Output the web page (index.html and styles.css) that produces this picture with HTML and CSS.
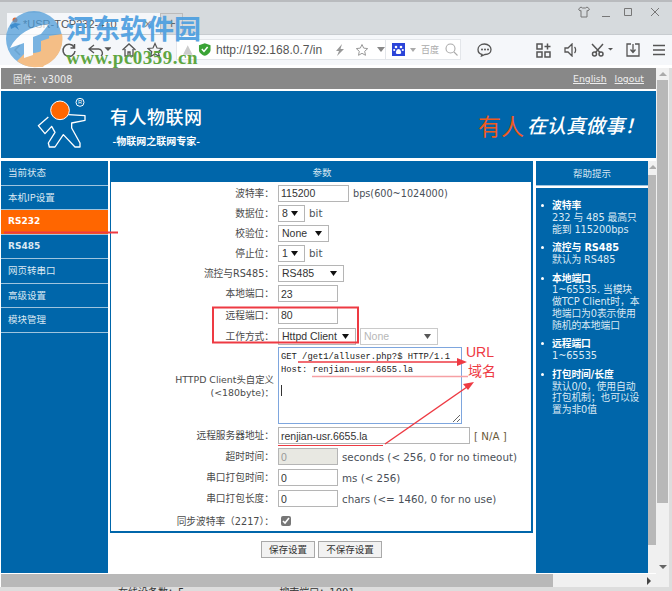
FILE: index.html
```html
<!DOCTYPE html>
<html lang="zh">
<head>
<meta charset="utf-8">
<title>USR-TCP232-410</title>
<link rel="stylesheet" href="styles.css">
</head>
<body>
<div class="topstrip"></div>
<div class="tabbar">
  <div class="tab"><svg class="tabicon" width="14" height="14" viewBox="0 0 14 14"><circle cx="6" cy="3" r="2.5" fill="#e8662a"/><path d="M1 8 6 6l6 1-4 2 2 4-4-3-4 2z" fill="#1f6db5"/></svg><span>*USR-TCP232-410</span><i class="tabx">×</i></div>
  <div class="newtab">+</div>
  <div class="winbtns">
    <svg width="14" height="14" viewBox="0 0 14 14" fill="none" stroke="#777"><path d="M4 2 1.500 4 3 6l1-.5V12h6V5.500l1 .5 1.500-2L10 2 8.500 3h-3z"/></svg>
    <svg width="12" height="14" viewBox="0 0 12 14" fill="none" stroke="#777"><path d="M2 11.500h8"/></svg>
    <svg width="12" height="14" viewBox="0 0 12 14" fill="none" stroke="#777"><path d="M2.500 3.500h7v7h-7z"/></svg>
    <svg width="12" height="14" viewBox="0 0 12 14" fill="none" stroke="#777"><path d="m2 3 8 8m0-8-8 8"/></svg>
  </div>
</div>
<div class="toolbar">
  <div class="navicons">
    <svg width="16" height="16" viewBox="0 0 16 16" fill="none" stroke="#555" stroke-width="1.500"><path d="M10 3 5 8l5 5" stroke="#bbb"/></svg>
    <svg width="16" height="16" viewBox="0 0 16 16" fill="none" stroke="#555" stroke-width="1.500"><path d="M13 5a6 6 0 1 0 1 4M13.500 2v4h-4"/></svg>
    <svg width="24" height="16" viewBox="0 0 24 16" fill="none" stroke="#555" stroke-width="1.300"><path d="M7 3 2 7l5 4M2 7h9a4 4 0 0 1 3 7"/><path d="m19 6 2 2 2-2z" fill="#555"/></svg>
    <svg width="16" height="16" viewBox="0 0 16 16" fill="none" stroke="#555" stroke-width="1.300"><path d="m1.500 8 6.500-6 6.500 6M4 7v7h3v-4h2v4h3V7"/></svg>
    <svg width="16" height="16" viewBox="0 0 16 16" fill="none" stroke="#555" stroke-width="1.200"><path d="m8 1.500 2 4.500 5 .5-3.800 3.200 1.200 4.800L8 12l-4.400 2.500 1.200-4.800L1 6.500 6 6z"/></svg>
  </div>
  <div class="urlbar">
    <svg width="14" height="14" viewBox="0 0 14 14" class="peak"><path d="M7 2 2 12h10z" fill="#ccc"/></svg>
    <svg width="14" height="15" viewBox="0 0 14 15"><path d="M7 1 13 3v5c0 3-3 5-6 6-3-1-6-3-6-6V3z" fill="#3aa335"/><path d="m4 7 2.200 2.500L10 5" fill="none" stroke="#fff" stroke-width="1.600"/></svg>
    <span class="url">http://192.168.0.7/in</span>
    <svg class="bolt" width="10" height="14" viewBox="0 0 10 14"><path d="M7 1 1 8h3l-2 5 7-7H5.500z" fill="#999"/></svg>
    <svg class="urlstar" width="14" height="14" viewBox="0 0 14 14" fill="none" stroke="#999"><path d="m7 1.500 1.700 3.600 4 .5-3 2.700.8 4L7 10.300 3.500 12.300l.8-4-3-2.700 4-.5z"/></svg>
    <svg class="caret" width="8" height="5" viewBox="0 0 8 5"><path d="M0 0h8L4 5z" fill="#888"/></svg>
  </div>
  <div class="searchbar">
    <svg width="13" height="13" viewBox="0 0 13 13"><path d="M0 0h13v13H0z" fill="#2b44d8"/><g fill="#fff"><circle cx="4" cy="4" r="1.300"/><circle cx="9" cy="4" r="1.300"/><circle cx="2.200" cy="7" r="1.100"/><circle cx="10.800" cy="7" r="1.100"/><path d="M6.500 6C4.500 6 3.500 9 4 10.500c1 .8 4 .8 5 0C9.500 9 8.500 6 6.500 6z"/></g></svg>
    <svg width="6" height="4" viewBox="0 0 6 4"><path d="M0 0h6L3 4z" fill="#aaa"/></svg>
    <span class="engine">百度</span>
    <svg width="13" height="13" viewBox="0 0 13 13" fill="none" stroke="#aaa" stroke-width="1.100"><circle cx="5.500" cy="5.500" r="4.500"/><path d="m9 9 3.500 3.500"/></svg>
  </div>
  <div class="tools">
    <svg class="chat" width="15" height="14" viewBox="0 0 15 14"><path d="M7.500 1C3.500 1 1 3.500 1 6.500 1 9 3 11 5 11.500L4.500 13l3.500-1.500c4 0 6-2.500 6-5S11.500 1 7.500 1z" fill="none" stroke="#555" stroke-width="1.300"/><circle cx="5" cy="6.500" r="1" fill="#555"/><circle cx="8" cy="6.500" r="1" fill="#555"/><circle cx="11" cy="6.500" r="1" fill="#555"/></svg>
    <svg width="15" height="15" viewBox="0 0 15 15" fill="none" stroke="#555" stroke-width="1.500"><path d="M1 1h5v5H1zM1 9h5v5H1zM9 9h5v5H9zM11.500.500v6M8.500 3.500h6"/></svg>
    <svg width="14" height="14" viewBox="0 0 14 14" fill="none" stroke="#555" stroke-width="1.300"><path d="M1 5v4h3l4 4V1L4 5zM10.500 4c1.500 1.500 1.500 4.500 0 6"/></svg>
    <svg width="22" height="14" viewBox="0 0 22 14" fill="none" stroke="#555" stroke-width="1.500"><circle cx="3.500" cy="11" r="2"/><circle cx="10" cy="11" r="2"/><path d="M1 1l8 8.500M12 1 4.500 9.500"/><path d="m17 5 2.500 2.500L22 5z" fill="#555" stroke="none"/></svg>
    <svg width="14" height="14" viewBox="0 0 14 14" fill="none" stroke="#555" stroke-width="1.300"><path d="M5 1H1v12h12V1H9M7 1v8M4.500 6.500 7 9.500l2.500-3"/></svg>
    <svg width="12" height="12" viewBox="0 0 12 12" fill="none" stroke="#555" stroke-width="1.300"><path d="M0 1.500h12M0 6h12M0 10.500h12"/></svg>
  </div>
</div>
<div class="viewport">
  <div class="pagewrap">
    <div class="page">
      <div class="fwbar"><span>固件：v3008</span><div class="fwlinks"><a>English</a><a>logout</a></div></div>
      <div class="header">
        <svg class="logo" width="70" height="64" viewBox="0 0 210 192" fill="none" stroke="#fff" stroke-width="4" stroke-linejoin="round"><path d="M115 65 165 68v14l-40 8v15l25 45v12h-15l-35-37-25 37H58l-3-12 20-32-10-18-20 22-20-24 30-26"/><circle cx="90" cy="52" r="28" fill="#ff6600" stroke-width="3"/><circle cx="150" cy="28" r="12" stroke-width="3"/><text x="144" y="34" fill="#fff" stroke="none" font-size="17" font-family="Liberation Sans">R</text></svg>
        <div class="brand"><div class="brandname">有人物联网</div><div class="brandsub">-物联网之联网专家-</div></div>
        <div class="slogan"><b>有人</b><em>在认真做事！</em></div>
      </div>
      <div class="frame">
        <nav class="nav">
          <a>当前状态</a><a>本机IP设置</a><a class="on">RS232</a><a class="latin">RS485</a><a>网页转串口</a><a>高级设置</a><a>模块管理</a>
        </nav>
        <main class="main">
          <div class="panel">
            <div class="panelhead">参数</div>
            <div class="row"><label>波特率：</label><input class="w70" value="115200"><span class="bps">bps(600~1024000)</span></div>
            <div class="row"><label>数据位：</label><select class="w26"><option>8</option></select><span>bit</span></div>
            <div class="row"><label>校验位：</label><select class="w51"><option>None</option></select></div>
            <div class="row"><label>停止位：</label><select class="w26"><option>1</option></select><span>bit</span></div>
            <div class="row"><label>流控与RS485：</label><select class="w66"><option>RS485</option></select></div>
            <div class="row tall"><label>本地端口：</label><input class="w60" value="23"></div>
            <div class="row taller"><label>远程端口：</label><input class="w60" value="80"></div>
            <div class="row"><label>工作方式：</label><select class="w78"><option>Httpd Client</option></select><select class="w78 off" disabled><option>None</option></select></div>
            <div class="row area"><label class="narrow">HTTPD Client头自定义<br>(&lt;180byte)：</label><textarea spellcheck="false">GET /get1/alluser.php?$ HTTP/1.1
Host: renjian-usr.6655.la</textarea></div>
            <div class="row tall"><label>远程服务器地址：</label><input class="w192" value="renjian-usr.6655.la"><span class="na">[ N/A ]</span></div>
            <div class="row tall"><label>超时时间：</label><input class="w60 dis" value="0" disabled><span>seconds (&lt; 256, 0 for no timeout)</span></div>
            <div class="row tall"><label>串口打包时间：</label><input class="w60" value="0"><span>ms (&lt; 256)</span></div>
            <div class="row tall"><label>串口打包长度：</label><input class="w60" value="0"><span>chars (&lt;= 1460, 0 for no use)</span></div>
            <div class="row last"><label>同步波特率（2217）：</label><input type="checkbox" checked class="chk"></div>
          </div>
          <div class="btns"><button class="b54">保存设置</button><button class="b64">不保存设置</button></div>
        </main>
        <aside class="help">
          <div class="helphead">帮助提示</div>
          <ul class="helpbody">
            <li><b>波特率</b><br>232 与 485 最高只<br>能到 115200bps</li>
            <li><b>流控与 RS485</b><br>默认为 RS485</li>
            <li><b>本地端口</b><br>1~65535. 当模块<br>做TCP Client时，本<br>地端口为0表示使用<br>随机的本地端口</li>
            <li><b>远程端口</b><br>1~65535</li>
            <li><b>打包时间/长度</b><br>默认0/0，使用自动<br>打包机制；也可以设<br>置为非0值</li>
          </ul>
        </aside>
        <div class="vscroll inner"><i class="up"></i><div class="thumb"></div></div>
      </div>
      <div class="hscroll"><div class="hthumb"></div><i class="right"></i></div>
    </div>
    <div class="vscroll outer"><i class="up"></i><div class="thumb"></div><i class="down"></i></div>
  </div>
  <div class="under"><span>在线设备数：5</span><span>搜索端口：1001</span></div>
</div>

<div class="mark">
  <svg class="markicon" width="58" height="58" viewBox="0 0 58 58"><circle cx="29" cy="29" r="28" fill="#4a9ad8"/><path d="M57 24A28 28 0 0 1 12 51L22 41A15 15 0 0 0 44 26z" fill="#f4a95a"/><path d="M5 38C12 24 26 16 44 14L36 24 28 27v18l-9 3V33z" fill="#fff"/><path d="M28 45h8V31l9-3v20l-7 9-10 0z" fill="#f4a95a"/></svg>
  <div class="marktitle">河东软件园</div>
  <div class="markurl">www.pc0359.cn</div>
</div>

<div class="note">
  <svg class="notes" width="672" height="591" viewBox="0 0 672 591" fill="none">
    <path d="M4 232.500h114" stroke="#ee3a43" stroke-width="2"/>
    <path d="M213 307.500h145v35H213z" stroke="#ee3a43" stroke-width="2"/>
    <path d="M298 362h160" stroke="#ee3a43" stroke-width="1.300"/>
    <path d="m457 358 10 4-10 4z" fill="#ee3a43"/>
    <path d="M312 376.500h156" stroke="#f6a0a4" stroke-width="1.300"/>
    <path d="M278 445.500h105" stroke="#ee3a43" stroke-width="1.200"/>
    <path d="m385 444 82-57" stroke="#ee3a43" stroke-width="1.500"/>
    <path d="m474 382-11 2 5 6z" fill="#ee3a43"/>
    <path d="M281.500 385v11" stroke="#333"/>
  </svg>
  <span class="noteurl">URL</span>
  <span class="notedomain">域名</span>
</div>
</body>
</html>
```

FILE: styles.css
```css
* { box-sizing: border-box; }
html, body { margin: 0; padding: 0; }
body {
  width: 672px; height: 591px; overflow: hidden; position: relative;
  display: flex; flex-direction: column;
  background: #fff;
  font-family: "DejaVu Sans", "Noto Sans CJK SC", sans-serif;
  font-size: 10px; color: #444;
}
.topstrip { height: 2px; background: #b9bbbe; flex: none; }
.tabbar { height: 33px; flex: none; background: #d6dadd; display: flex; align-items: flex-end; position: relative; border-bottom: 1px solid #c8ccd0; }
.tab { width: 153px; height: 21px; margin-left: 7px; background: #f5f7fa; display: flex; align-items: center; gap: 0; padding-left: 2px; font: 11px "Liberation Sans", sans-serif; color: #555; }
.tab span { flex: 1; white-space: nowrap; }
.tabx { font-style: normal; color: #888; margin-right: 8px; font-size: 14px; }
.newtab { width: 23px; height: 21px; border: 1px solid #bbb; border-bottom: 0; text-align: center; font: 14px/19px "Liberation Sans", sans-serif; color: #666; }
.winbtns { margin-left: auto; align-self: flex-start; display: flex; padding: 3px 11px 0 0; gap: 9px; }
.winbtns svg:nth-child(3) { margin-left: 1px; }
.winbtns svg:nth-child(4) { margin-left: 6px; }
.toolbar { height: 33px; flex: none; background: #f5f7fa; display: flex; align-items: flex-start; padding-top: 4px; border-bottom: 3px solid #fff; }
.navicons { width: 176px; display: flex; gap: 10px; align-items: center; height: 22px; padding-left: 10px; flex: none; }
.navicons svg:first-child { margin-right: 13px; }
.navicons svg:nth-child(2) { margin-left: 12px; }
.urlbar { width: 210px; height: 21px; background: #fff; border: 1px solid #e3e6ea; display: flex; align-items: center; gap: 3px; padding-left: 4px; font: 12px "Liberation Sans", sans-serif; color: #555; overflow: hidden; flex: none; }
.url { width: 108px; margin-left: 2px; white-space: nowrap; overflow: hidden; flex: none; }
.bolt { margin-left: 8px; flex: none; }
.urlstar { margin-left: 7px; flex: none; }
.caret { margin-left: 5px; flex: none; }
.searchbar { width: 76px; height: 21px; background: #fff; border: 1px solid #e3e6ea; display: flex; align-items: center; gap: 5px; padding-left: 6px; margin-left: -1px; flex: none; }
.engine { width: 19px; overflow: hidden; white-space: nowrap; font-size: 9px; color: #aaa; font-family: "Noto Sans CJK SC", sans-serif; }
.tools { display: flex; align-items: center; gap: 13px; height: 22px; margin-left: 16px; }
.chat { margin-right: 31px; }
.viewport { flex: 1; background: #c9c9c9; display: flex; flex-direction: column; overflow: hidden; min-height: 0; }
.pagewrap { display: flex; height: 519px; flex: none; background: #fff; border-right: 3px solid #ddd; padding-left: 1px; }
.page { width: 655px; display: flex; flex-direction: column; flex: none; }
.fwbar { height: 21px; background: #888; color: #eee; display: flex; justify-content: space-between; align-items: center; padding: 0 12px 0 12px; font-size: 9.700px; flex: none; }
.fwlinks { display: flex; gap: 8px; font-size: 9.300px; }
.fwlinks a { text-decoration: underline; }
.header { height: 67px; margin-top: 2px; background: #0066aa; flex: none; display: flex; align-items: center; position: relative; }
.logo { margin-left: 29px; flex: none; }
.brand { margin-left: 10px; margin-top: 4px; color: #fff; font-family: "Noto Sans CJK SC", serif; text-align: center; }
.brandname { font-size: 18px; line-height: 24px; font-weight: 500; letter-spacing: .5px; }
.brandsub { font-size: 10px; font-weight: 700; line-height: 17px; margin-top: 4px; }
.slogan { margin-left: auto; margin-right: 12px; display: flex; align-items: center; gap: 3px; font-family: "Noto Sans CJK SC", sans-serif; }
.slogan b { font-weight: 400; color: #ef5a1e; font-size: 23px; }
.slogan em { color: #fff; font-size: 19.500px; font-weight: 500; font-style: italic; }
.frame { flex: 1; display: flex; margin-top: 3px; min-height: 0; }
.nav { width: 107px; margin-right: 2px; background: #0066aa; flex: none; font-family: "Noto Sans CJK SC", sans-serif; }
.nav a { display: block; height: 24.500px; padding-left: 7px; line-height: 22px; color: #dbe8f2; font-size: 9.500px; border-bottom: 1px solid #9fc4de; }
.nav a.on, .nav a.latin { font-weight: 700; font-family: "DejaVu Sans", sans-serif; font-size: 9px; }
.nav a.on { background: #ff6600; color: #fff; }
.main { width: 423px; flex: none; margin-right: 3px; }
.panel { border: 1px solid #0066aa; border-width: 0 2px 2px 1px; height: 372px; }
.panelhead { height: 21px; margin-right: -2px; background: #0066aa; color: #d6e6f2; text-align: center; line-height: 23px; font-size: 9.500px; margin-bottom: 1px; font-family: "Noto Sans CJK SC", sans-serif; }
.row { display: flex; align-items: center; height: 20px; gap: 4px; white-space: nowrap; }
.row.tall { height: 21px; }
.row.taller { height: 22px; }
.row.last { height: 24px; }
.row.area { height: 79px; align-items: center; }
.row label { width: 163px; flex: none; text-align: right; font-size: 9.700px; color: #4a4a4a; line-height: 13px; }
.row label.narrow { font-size: 9.400px; }
.row span { font-size: 10.300px; color: #4a5058; }
.row span.bps { font-size: 9.700px; }
input, select, textarea { font-family: "Liberation Sans", sans-serif; color: #333; margin: 0; border-radius: 0; }
input:not(.chk) { height: 17px; border: 1px solid #b5b5b5; padding: 0 2px; background: #fff; flex: none; font-size: 10.500px; }
select { height: 17px; border: 1px solid #b5b5b5; padding: 0 0 0 3px; flex: none; font-size: 10.500px; appearance: none; background: #fff url("data:image/svg+xml,%3Csvg xmlns='http://www.w3.org/2000/svg' width='7' height='5'%3E%3Cpath d='M0 0h7L3.500 5z' fill='%23111'/%3E%3C/svg%3E") no-repeat right 6px center; }
select.off { color: #999; }
.w26 { width: 27px; }
.w51 { width: 51px; }
.w60 { width: 60px; }
.w66 { width: 66px; }
.w70 { width: 71px; }
.w78 { width: 78px; }
.w192 { width: 192px; }
.dis { background: #e8e8e2 !important; color: #999; }
textarea { width: 184px; height: 77px; border: 1px solid #7ea6de; padding: 3px 2px; resize: both; font: 8.800px/12.500px "Liberation Mono", monospace; color: #222; outline: 0; overflow: hidden; }
.row span.na { color: #6b5a3a; }
.chk { width: 10px; height: 10px; margin: 0 0 0 3px; accent-color: #777; }
.btns { display: flex; justify-content: center; gap: 3px; margin-top: 8px; }
button { height: 17px; padding: 0; background: #f2f2f2; border: 1px solid #a9a9a9; font: 9.500px/15px "Noto Sans CJK SC", sans-serif; color: #333; }
.b54 { width: 54px; }
.b64 { width: 64px; }
.help { width: 112px; flex: none; background: #fff; display: flex; flex-direction: column; gap: 2px; }
.helphead { height: 25px; flex: none; background: #0066aa; color: #d6e6f2; text-align: center; font: 9.500px/25px "Noto Sans CJK SC", sans-serif; border-bottom: 1px solid #9fc4de; }
.helpbody { flex: 1; margin: 0; padding: 12px 0 0 16px; background: #0066aa; color: #dbe9f4; list-style: none; font-size: 9.800px; line-height: 11.800px; }
.helpbody li { margin-bottom: 6.800px; position: relative; white-space: nowrap; letter-spacing: -.1px; }
.helpbody li::before { content: ""; position: absolute; left: -11px; top: 4px; width: 3px; height: 3px; border-radius: 50%; background: #fff; }
.helpbody b { color: #fff; }
.vscroll { display: flex; flex-direction: column; align-items: center; flex: none; background: #f0f0f0; position: relative; }
.vscroll.inner { width: 9px; padding-top: 14px; }
.vscroll.outer { width: 13px; height: 100%; padding-top: 12px; }
.inner .thumb { width: 9px; height: 370px; background: #b8b8b8; }
.outer .thumb { height: 423px; width: 11px; background: #b8b8b8; }
.up { position: absolute; top: 4px; border: 4px solid transparent; border-top: 0; border-bottom: 4px solid #aaa; }
.down { position: absolute; bottom: 18px; border: 4px solid transparent; border-bottom: 0; border-top: 4px solid #666; }
.hscroll { height: 13px; flex: none; background: #f0f0f0; display: flex; align-items: stretch; position: relative; margin-top: 1px; }
.hthumb { width: 552px; background: #b8b8b8; }
.right { position: absolute; right: 5px; top: 3px; border: 4px solid transparent; border-right: 0; border-left: 4px solid #444; }
.under { flex: 1; display: flex; gap: 95px; padding-left: 118px; font-size: 10px; line-height: 11px; color: #333; background: #ddd; overflow: hidden; }

.mark { position: absolute; left: 0; top: 0; width: 210px; height: 70px; }
.markicon { position: absolute; left: 5px; top: 10px; opacity: .72; }
.marktitle { position: absolute; left: 66px; top: 10px; font: 700 27px/36px "Noto Sans CJK SC", sans-serif; color: #4d9fe0; white-space: nowrap; opacity: .92; }
.markurl { position: absolute; left: 66px; top: 47px; font: 700 19px/22px "Liberation Serif", serif; color: #5fa642; white-space: nowrap; letter-spacing: .5px; }
.note { position: absolute; inset: 0; pointer-events: none; }
.notes { position: absolute; left: 0; top: 0; }
.noteurl { position: absolute; left: 466px; top: 344px; color: #ee3a43; font: 14px/16px "Liberation Sans", sans-serif; }
.notedomain { position: absolute; left: 468px; top: 361px; color: #ee3a43; font: 14px/19px "Noto Sans CJK SC", sans-serif; }
```
